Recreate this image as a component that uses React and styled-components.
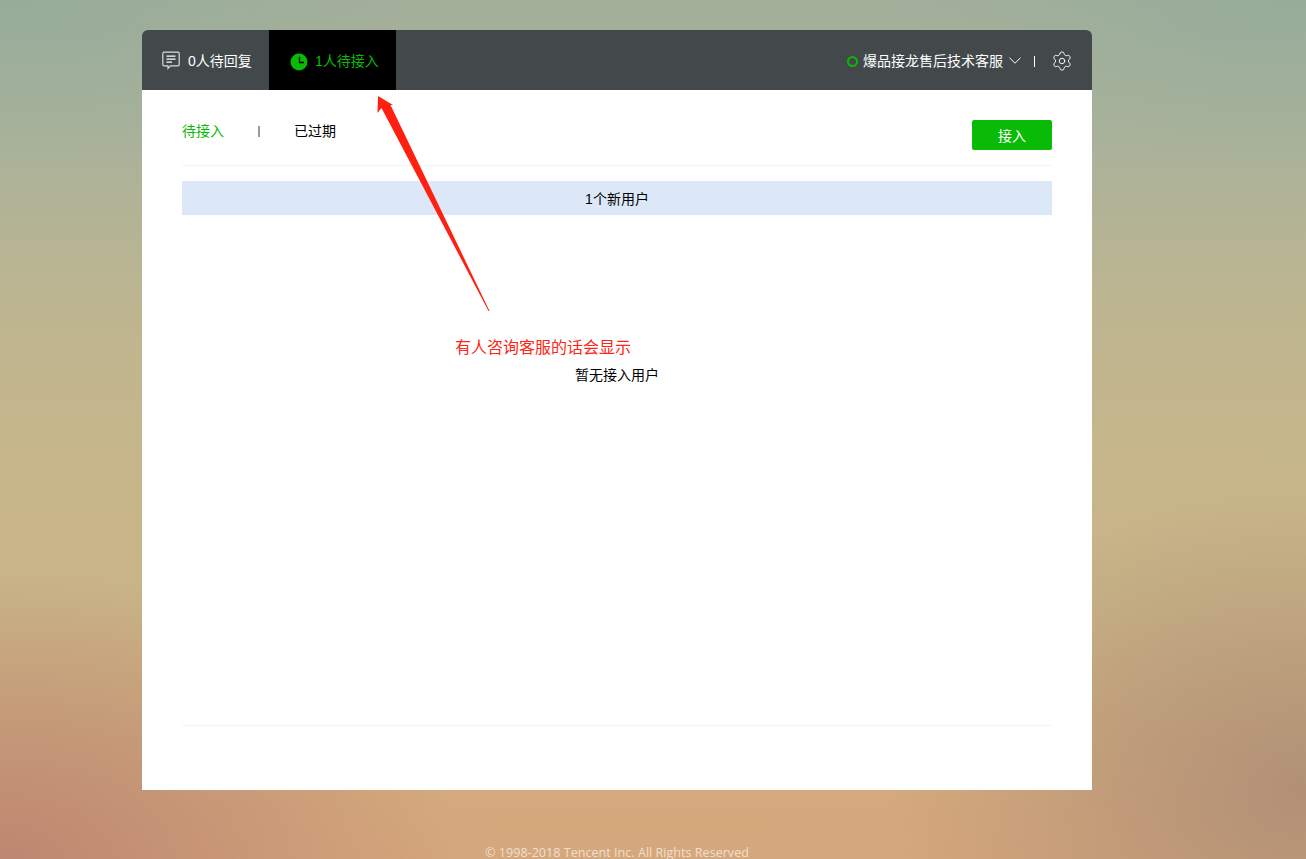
import React from 'react'
import styled, { createGlobalStyle } from 'styled-components'
import { Settings } from 'lucide-react'

const GlobalStyle = createGlobalStyle`
  html, body {
    margin: 0;
    padding: 0;
    height: 100%;
    overflow: hidden;
  }
  body {
    font-family: "Liberation Sans", "Noto Sans CJK SC", sans-serif;
    font-size: 14px;
    color: #000;
  }
`

const Page = styled.div`
  width: 100%;
  height: 859px;
  overflow: hidden;
  display: flex;
  flex-direction: column;
  padding: 30px 0 0 142px;
  box-sizing: border-box;
  background:
    radial-gradient(ellipse 420px 300px at 1306px 790px, rgba(168, 138, 116, 0.8), transparent),
    radial-gradient(ellipse 460px 290px at 0px 859px, rgba(178, 122, 108, 0.72), transparent),
    radial-gradient(ellipse 420px 170px at 0px 0px, rgba(145, 172, 155, 0.7), transparent),
    radial-gradient(ellipse 420px 170px at 1306px 0px, rgba(145, 172, 155, 0.7), transparent),
    linear-gradient(180deg, #a3af9a 0, #abb29a 150px, #bdb590 300px, #c6b68b 450px, #c9b487 600px, #cfad80 720px, #d5a97d 800px, #d5a77c 859px);
`

const Panel = styled.main`
  position: relative;
  width: 950px;
  flex: none;
`

const Header = styled.header`
  height: 60px;
  display: flex;
  align-items: stretch;
  background: #43494b;
  border-radius: 6px 6px 0 0;
  overflow: hidden;
`

const HeaderTab = styled.div`
  width: 127px;
  display: flex;
  align-items: center;
  gap: ${(p) => (p.$active ? 7 : 8)}px;
  padding-left: ${(p) => (p.$active ? 21 : 20)}px;
  box-sizing: border-box;
  background: ${(p) => (p.$active ? '#000' : 'transparent')};
  color: ${(p) => (p.$active ? '#09bb07' : '#fff')};
`

const HeaderRight = styled.div`
  margin-left: auto;
  display: flex;
  align-items: center;
  padding-right: 19px;
  color: #fff;
`

const StatusRing = styled.span`
  width: 11px;
  height: 11px;
  box-sizing: border-box;
  border: 2px solid #09bb07;
  border-radius: 50%;
  margin: 3px 5px 0 0;
`

const HeaderDivider = styled.span`
  width: 1px;
  height: 11px;
  background: #fff;
  margin: 2px 16px 0 13px;
`

const GearIcon = styled(Settings)`
  margin-top: 1px;
`

const Body = styled.section`
  height: 700px;
  background: #fff;
  padding: 0 40px;
  box-sizing: border-box;
  display: flex;
  flex-direction: column;
`

const TabRow = styled.div`
  height: 76px;
  flex: none;
  box-sizing: border-box;
  display: flex;
  align-items: flex-start;
  border-bottom: 1px solid #f4f4f4;
`

const SubTab = styled.span`
  margin-top: 32px;
  line-height: 18px;
  color: ${(p) => (p.$active ? '#09bb07' : '#000')};
`

const SubDivider = styled.span`
  width: 2px;
  height: 11px;
  margin: 36px 34px 0;
  background: #999;
`

const JoinButton = styled.button`
  margin: 30px 0 0 auto;
  width: 80px;
  height: 30px;
  border: 0;
  border-radius: 2px;
  padding: 0;
  background: #09bb07;
  color: #fff;
  font: inherit;
`

const Banner = styled.div`
  margin-top: 15px;
  height: 34px;
  flex: none;
  display: flex;
  align-items: center;
  justify-content: center;
  background: #dce8f8;
`

const EmptyList = styled.div`
  flex: 1;
  padding-top: 151px;
  text-align: center;
  line-height: 18px;
  border-bottom: 1px solid #f4f4f4;
`

const BodyFoot = styled.div`
  height: 64px;
  flex: none;
`

const Note = styled.span`
  position: absolute;
  left: 313px;
  top: 308px;
  font-size: 16px;
  line-height: 20px;
  color: #ff2416;
  white-space: nowrap;
`

const Arrow = styled.svg`
  position: absolute;
  left: 0;
  top: 0;
  pointer-events: none;
`

const Copyright = styled.footer`
  width: 950px;
  margin-top: 56px;
  text-align: center;
  font-family: "Open Sans", sans-serif;
  font-size: 12.6px;
  line-height: 13px;
  color: rgba(255, 255, 255, 0.65);
`

const ChatIcon = () => (
  <svg width="18" height="19" viewBox="0 0 18 19" fill="none" stroke="#fff" strokeWidth="1.2">
    <path d="M2.2 1.2h13.6a1.4 1.4 0 0 1 1.4 1.4v10.8a1.4 1.4 0 0 1-1.4 1.4H8.6l-2.6 2.6v-2.6H2.2a1.4 1.4 0 0 1-1.4-1.4V2.6a1.4 1.4 0 0 1 1.4-1.4z" stroke="#d9dbdb" />
    <path d="M4.5 5.2h9M4.5 8.2h9M4.5 11.2h5.5" />
  </svg>
)

const ClockSvg = styled.svg`
  margin-top: 3px;
`

const ClockIcon = () => (
  <ClockSvg width="18" height="18" viewBox="0 0 18 18">
    <circle cx="9" cy="9" r="8.5" fill="#09bb07" />
    <path d="M9.5 4v5.5H14" fill="none" stroke="#000" strokeWidth="1.3" />
  </ClockSvg>
)

const ChevronSvg = styled.svg`
  margin-left: 6px;
`

const ChevronIcon = () => (
  <ChevronSvg width="12" height="7" viewBox="0 0 12 7" fill="none" stroke="#fff" strokeWidth="1">
    <path d="M.5.8 6 6.2 11.5.8" />
  </ChevronSvg>
)

export default function App() {
  return (
    <Page>
      <GlobalStyle />
      <Panel>
        <Header>
          <HeaderTab>
            <ChatIcon />
            <span>0人待回复</span>
          </HeaderTab>
          <HeaderTab $active>
            <ClockIcon />
            <span>1人待接入</span>
          </HeaderTab>
          <HeaderRight>
            <StatusRing />
            <span>爆品接龙售后技术客服</span>
            <ChevronIcon />
            <HeaderDivider />
            <GearIcon size={22} strokeWidth={1} color="#fff" />
          </HeaderRight>
        </Header>
        <Body>
          <TabRow>
            <SubTab $active>待接入</SubTab>
            <SubDivider />
            <SubTab>已过期</SubTab>
            <JoinButton>接入</JoinButton>
          </TabRow>
          <Banner>1个新用户</Banner>
          <EmptyList>暂无接入用户</EmptyList>
          <BodyFoot />
        </Body>
        <Arrow width="400" height="300">
          {/* tip sits just under the active tab, tail runs down to the note */}
          <polygon points="236,66 251,75 248.5,75 347.5,281 346.5,281 239.5,78 235.5,83" fill="#ff2012" />
        </Arrow>
        <Note>有人咨询客服的话会显示</Note>
      </Panel>
      <Copyright>© 1998-2018 Tencent Inc. All Rights Reserved</Copyright>
    </Page>
  )
}
